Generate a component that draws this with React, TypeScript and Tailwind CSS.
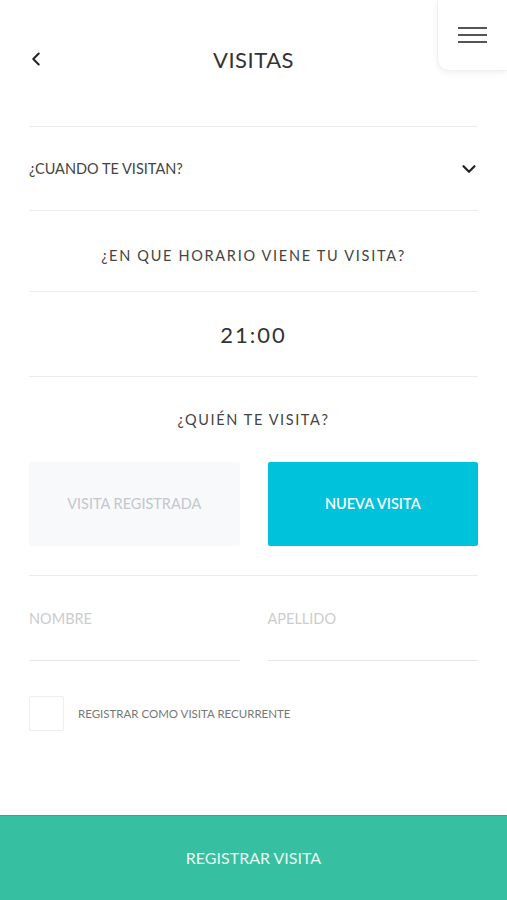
import { ChevronLeft, ChevronDown } from "lucide-react";

const font = { fontFamily: "Lato, 'Noto Sans', sans-serif" };

export default function App() {
  return (
    <div
      className="relative flex min-h-[900px] w-full flex-col bg-white text-[#3a3a3a]"
      style={font}
    >
      {/* Menu button */}
      <button className="absolute right-0 top-0 flex h-[71px] w-[70px] items-center justify-center rounded-bl-[12px] border-b border-l border-[#f0f0f0] bg-white shadow-[0_2px_6px_rgba(0,0,0,0.06)]">
        <span className="-mt-[1px] flex w-[29px] flex-col gap-[5px]">
          <span className="block h-[2px] w-full bg-[#555]" />
          <span className="block h-[2px] w-full bg-[#555]" />
          <span className="block h-[2px] w-full bg-[#555]" />
        </span>
      </button>

      <div className="px-[29px]">
        {/* Header */}
        <div className="relative flex h-[126px] items-center justify-center pb-[8px]">
          <ChevronLeft
            className="absolute left-[-4px] top-[48px] text-[#222]"
            size={22}
            strokeWidth={2.2}
          />
          <h1 className="text-[22px] tracking-[0.5px] text-[#333]">VISITAS</h1>
        </div>

        {/* Cuando */}
        <div className="flex h-[85px] items-center justify-between border-t border-b border-[#ececec]">
          <span className="text-[14.5px] text-[#444]">¿CUANDO TE VISITAN?</span>
          <ChevronDown className="mr-[-2px] text-[#222]" size={22} strokeWidth={2.4} />
        </div>

        {/* Horario */}
        <div className="flex h-[81px] items-center justify-center border-b border-[#ececec] pt-[9px]">
          <span className="text-[14.5px] tracking-[1.7px] text-[#444]">
            ¿EN QUE HORARIO VIENE TU VISITA?
          </span>
        </div>

        <div className="flex h-[85px] items-center justify-center border-b border-[#ececec]">
          <span className="text-[22px] tracking-[2px] text-[#333]">21:00</span>
        </div>

        {/* Quien */}
        <div className="pt-[32px] text-center leading-[20px]">
          <span className="text-[14.5px] tracking-[1.6px] text-[#444]">¿QUIÉN TE VISITA?</span>
        </div>

        <div className="mt-[32px] grid grid-cols-2 gap-[28px] border-b border-[#ececec] pb-[29px]">
          <button className="flex h-[84px] items-center justify-center rounded-[2px] bg-[#f7f9fb] text-[14.5px] text-[#c4c7cb]">
            VISITA REGISTRADA
          </button>
          <button className="flex h-[84px] items-center justify-center rounded-[2px] bg-[#00c3db] text-[14.5px] font-semibold text-white">
            NUEVA VISITA
          </button>
        </div>

        {/* Inputs */}
        <div className="grid grid-cols-2 gap-[28px]">
          <div className="h-[85px] border-b border-[#e6e6e6] pt-[32px] text-[14.5px] text-[#cccccc]">
            NOMBRE
          </div>
          <div className="h-[85px] border-b border-[#e6e6e6] pt-[32px] text-[14.5px] text-[#cccccc]">
            APELLIDO
          </div>
        </div>

        {/* Checkbox */}
        <label className="mt-[35px] flex items-center gap-[14px]">
          <span className="block h-[35px] w-[35px] rounded-[2px] border border-[#eeeeee] bg-white" />
          <span className="text-[11.5px] text-[#777]">REGISTRAR COMO VISITA RECURRENTE</span>
        </label>
      </div>

      {/* Submit */}
      <button className="mt-auto flex h-[85px] w-full items-center justify-center border-t border-[#2fa98d] bg-[#36bfa1] text-[16px] text-[#e6faf3]">
        REGISTRAR VISITA
      </button>
    </div>
  );
}
